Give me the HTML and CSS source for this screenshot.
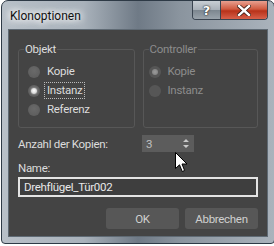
FILE: index.html
```html
<!DOCTYPE html>
<html lang="de">
<head>
  <meta charset="UTF-8">
  <title>Klonoptionen</title>
  <link rel="stylesheet" href="styles.css">
</head>
<body>
  <div class="window">
    <div class="titlebar">
      <span class="title">Klonoptionen</span>
      <div class="caption-buttons">
        <div class="cap-btn help">?</div>
        <div class="cap-btn close">
          <svg width="14" height="11" viewBox="0 0 14 11">
            <path d="M2 1 L12 10 M12 1 L2 10" stroke="#3a1a14" stroke-width="4" stroke-linecap="square"/>
            <path d="M2 1 L12 10 M12 1 L2 10" stroke="#fff" stroke-width="2.4" stroke-linecap="square"/>
          </svg>
        </div>
      </div>
    </div>

    <div class="client">
      <div class="groups">
        <fieldset class="group objekt">
          <legend>Objekt</legend>
          <div class="radio"><span class="dot"></span><span class="lbl">Kopie</span></div>
          <div class="radio checked"><span class="dot"></span><span class="lbl focus">Instanz</span></div>
          <div class="radio"><span class="dot"></span><span class="lbl">Referenz</span></div>
        </fieldset>
        <fieldset class="group controller disabled">
          <legend>Controller</legend>
          <div class="radio checked"><span class="dot"></span><span class="lbl">Kopie</span></div>
          <div class="radio"><span class="dot"></span><span class="lbl">Instanz</span></div>
        </fieldset>
      </div>

      <div class="count-row">
        <span class="count-label">Anzahl der Kopien:</span>
        <div class="spinner">
          <span>3</span>
          <svg width="6" height="9" viewBox="0 0 6 9">
            <path d="M3 0 L6 3 L0 3 Z M0 6 L6 6 L3 9 Z" fill="#c8c8c8"/>
          </svg>
        </div>
      </div>

      <div class="name-label">Name:</div>
      <div class="name-input">Drehflügel_Tür002</div>

      <div class="actions">
        <div class="btn">OK</div>
        <div class="btn">Abbrechen</div>
      </div>
    </div>

    <svg class="cursor" width="13" height="21" viewBox="0 0 13 21">
      <path d="M0.5 0.5 L0.5 16.5 L4.5 12.8 L7.2 19.5 L9.6 18.5 L7 12 L12 12 Z" fill="#fff" stroke="#000" stroke-width="1" stroke-linejoin="miter"/>
    </svg>
  </div>
</body>
</html>
```

FILE: styles.css
```css
body { margin: 0; background: #fff; font-family: Roboto, "Noto Sans", sans-serif; }

.window {
  position: relative;
  width: 272px;
  height: 242px;
  margin: 0 1px;
  border: 1px solid #2e3a46;
  border-radius: 7px 7px 4px 4px;
  background: linear-gradient(90deg, #b8c0c8 0%, #a9b2bb 30%, #6f7a86 50%, #8a949e 65%, #aab3bc 100%);
  display: flex;
  flex-direction: column;
  overflow: hidden;
}

.titlebar {
  height: 28px;
  display: flex;
  justify-content: space-between;
  align-items: flex-start;
}
.title {
  margin: 8px 0 0 8px;
  font-size: 12px;
  line-height: 14px;
  color: #111;
  text-shadow: 0 0 6px #fff, 0 0 8px #fff, 0 0 10px #fff;
}

.caption-buttons {
  display: flex;
  margin-right: 6px;
  border: 1px solid #3a4450;
  border-top: none;
  border-radius: 0 0 4px 4px;
  overflow: hidden;
}
.cap-btn {
  height: 18px;
  display: flex;
  align-items: center;
  justify-content: center;
}
.help {
  width: 27px;
  border-right: 1px solid #3a4450;
  background: linear-gradient(#c8ced4 0%, #a9b1b9 48%, #7d8790 52%, #9aa3ab 100%);
  color: #fff;
  font-family: "DejaVu Sans", sans-serif;
  font-weight: bold;
  font-size: 13px;
  text-shadow: 0 0 2px #222, 0 0 1px #000;
}
.close {
  width: 46px;
  background: linear-gradient(#e8a090 0%, #d05a40 45%, #b8321a 55%, #d8604a 100%);
}

.client {
  flex: 1;
  margin: 0 6px 6px 6px;
  border: 1px solid #5f6a74;
  background: #444;
  padding: 11px 9px 0 9px;
  display: flex;
  flex-direction: column;
  font-size: 11.5px;
  letter-spacing: -0.3px;
  color: #dcdcdc;
}

.groups {
  display: flex;
  gap: 8px;
}
.group {
  margin: 0;
  border: 1px solid #575757;
  border-radius: 3px;
  padding: 5px 0 8px 0;
  height: 87px;
  box-sizing: border-box;
}
.objekt { width: 117px; padding-left: 9px; }
.controller { width: 116px; padding-left: 5px; }
.group legend {
  padding: 0 1px;
  margin-left: -4px;
  line-height: 16px;
}
.controller legend { margin-left: 0; }

.radio {
  height: 19px;
  display: flex;
  align-items: center;
}
.dot {
  width: 12px;
  height: 12px;
  border-radius: 50%;
  background: radial-gradient(circle at 50% 40%, #6a6a6a, #5a5a5a);
  margin-right: 4px;
  display: flex;
  align-items: center;
  justify-content: center;
}
.radio.checked .dot::after {
  content: "";
  width: 6px;
  height: 6px;
  border-radius: 50%;
  background: radial-gradient(circle at 50% 45%, #fff, #d8d8d8 60%, #aaa);
  box-shadow: 0 0 2px #ccc;
}
.lbl {
  padding: 0 2px;
  line-height: 15px;
  border: 1px solid transparent;
}
.lbl.focus { border: 1px dotted #bbb; }

.disabled { color: #8c8c8c; }
.disabled .dot { background: #565656; }
.disabled .radio.checked .dot::after {
  background: radial-gradient(circle, #9a9a9a, #7c7c7c);
  box-shadow: none;
}

.count-row {
  display: flex;
  align-items: center;
  margin-top: 7px;
  height: 17px;
}
.count-label { width: 124px; }
.spinner {
  width: 52px;
  height: 17px;
  background: #5c5c5c;
  box-sizing: border-box;
  padding: 0 5px 0 4px;
  display: flex;
  align-items: center;
  justify-content: space-between;
  color: #c0c0c0;
}

.name-label {
  margin-top: 8px;
  line-height: 16px;
}
.name-input {
  margin-top: 1px;
  height: 20px;
  box-sizing: border-box;
  border: 2px solid #e4e4e4;
  background: #3e3e3e;
  padding: 0 4px;
  line-height: 16px;
  color: #e8e8e8;
}

.actions {
  display: flex;
  justify-content: flex-end;
  gap: 6px;
  margin-top: 11px;
}
.btn {
  width: 73px;
  height: 21px;
  border-radius: 3px;
  background: #575757;
  color: #d0d0d0;
  display: flex;
  align-items: center;
  justify-content: center;
}

.cursor {
  position: absolute;
  left: 173px;
  top: 151px;
}
```
